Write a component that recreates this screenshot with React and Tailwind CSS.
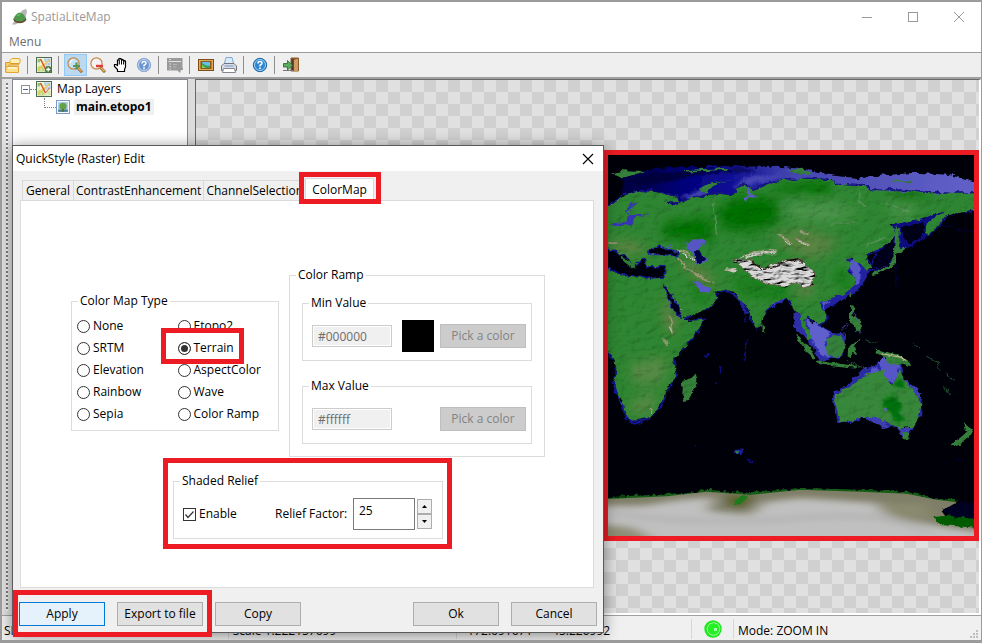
import { useState } from 'react'
import clsx from 'clsx'

const TABS = ['General', 'ContrastEnhancement', 'ChannelSelection', 'ColorMap']

const MAP_TYPES = [
  'None', 'Etopo2',
  'SRTM', 'Terrain',
  'Elevation', 'AspectColor',
  'Rainbow', 'Wave',
  'Sepia', 'Color Ramp',
]

// Red rectangle drawn over the part of the window being explained
function Mark({ className }) {
  return <div className={clsx('absolute border-5 border-[#ed1c24] pointer-events-none', className)} />
}

function Icon({ children, size = 16 }) {
  return (
    <svg width={size} height={size} viewBox="0 0 16 16" fill="none" className="shrink-0" aria-hidden="true">
      {children}
    </svg>
  )
}

function LogoIcon() {
  return (
    <Icon>
      <path d="M8 5 L10 1.500 L14 0 L15 2 L13.500 9 L11 9Z" fill="#b4b4b4" />
      <path d="M0 15.500 L3 11 L7 13 L4 15.500Z" fill="#b9b3ae" />
      <path d="M1.200 10 Q2 14 7 14.200 Q13 14 14.500 10.500 L13 8 L3 8Z" fill="#6b4a32" />
      <path d="M1.800 10 Q3.500 4 8 3.500 Q12 4.500 13.800 9.500 Q11 12.500 8 12.500 Q4 12.500 1.800 10Z" fill="#4d9a4e" />
      <path d="M4.500 7 Q6 4.500 8.500 4.500 Q8 7 4.500 7Z" fill="#7fc07a" />
    </Icon>
  )
}

function OpenIcon() {
  return (
    <Icon>
      <path d="M5 7 V3.500 L7 1.500 H13 Q15.500 1 15.300 4 L14 7Z" fill="#fff1b8" stroke="#e0a32e" />
      <path d="M.5 5.500 H4.500 L6 6.500 H13.500 V8 H4 L.5 15Z" fill="#f5cf6b" stroke="#dc9a25" />
      <path d="M1 9.500 H13.500 V15.500 H.8Z" fill="#ffe08a" stroke="#e3a534" />
      <path d="M3 11 H12" stroke="#fff8dc" strokeWidth="1.500" />
    </Icon>
  )
}

function MapIcon({ add }) {
  return (
    <Icon>
      <rect x=".5" y=".5" width="15" height="15" fill="#fff" stroke="#4d6b50" />
      <rect x="1.500" y="1.500" width="13" height="13" fill="#eff0b8" />
      <path d="M8 1.500 H14.500 V8 L10 9Z" fill="#a6c8ef" />
      <path d="M1.500 2 H5 L4 6 H1.500Z" fill="#8cc474" />
      <path d="M1.500 10 L6 8 L9 14.500 H1.500Z" fill="#b9da80" />
      <path d="M10 10 H14.500 V14.500 H9Z" fill="#cfe6b0" />
      <path d="M1.500 5.500 H14 M5 1.500 V14 M11 1.500 V14" stroke="#fff" strokeOpacity=".5" />
      <path d="M2 13 L13.500 3" stroke="#f3c64c" strokeWidth="1.400" />
      <path d="M4.500 2 L9.500 12" stroke="#d8503c" strokeWidth="1.500" />
      {add
        ? (
          <>
            <circle cx="12.200" cy="12.500" r="3.400" fill="#4b7a43" />
            <path d="M12.200 10.500 V14.500 M10.200 12.500 H14.200" stroke="#fff" strokeWidth="1.300" />
          </>
        )
        : <path d="M9.500 12 L13.500 7" stroke="#e0693d" />}
    </Icon>
  )
}

function ZoomIcon({ out }) {
  return (
    <Icon>
      <path d="M10.500 10.500 L15 15.200" stroke="#9a642c" strokeWidth="2.800" />
      <path d="M11 11 L14.500 14.500" stroke="#e8b266" strokeWidth="1.200" />
      <circle cx="6.500" cy="6.500" r="5.600" fill={out ? '#f6f1f2' : '#c6e0f6'} stroke="#c08a48" strokeWidth="1.200" />
      <path d="M3 6 Q3.500 3 6.500 2.600" stroke="#fff" />
      {out
        ? <path d="M6 9 H13" stroke="#e23b3b" strokeWidth="2.400" />
        : <path d="M9.500 5.500 V12.500 M6 9 H13" stroke="#4f9a5c" strokeWidth="2.200" />}
    </Icon>
  )
}

function HandIcon() {
  return (
    <Icon>
      <path
        d="M4.500 14.500 V12.500 L1.500 9.500 V7.500 H3 L4.500 8.500 V3 H6 V1.500 H8 V2.500 H10 V3.500 H12 V4.500 H12.500 V10 L11.500 12.500 V14.500Z"
        fill="#fff" stroke="#000" strokeWidth="1.200"
      />
      <path d="M6.300 3 V7.500 M8.500 2.500 V7.500 M10.600 3.500 V7.500" stroke="#000" />
    </Icon>
  )
}

function HelpIcon({ soft }) {
  return (
    <Icon>
      <circle cx="8" cy="8" r="6.700" fill={soft ? '#6b96d2' : '#2f86cf'} stroke={soft ? '#8fa9d4' : '#2467a8'} />
      <circle cx="8" cy="8" r="5.500" stroke={soft ? '#c9daf2' : '#9cd0f5'} />
      <path d="M6 6.500 Q6 4.500 8 4.500 Q10 4.500 10 6.300 Q10 7.500 8 8.300 V9.500" stroke="#fff" strokeWidth="1.500" />
      <rect x="7.200" y="10.500" width="1.600" height="1.600" fill="#fff" />
    </Icon>
  )
}

function TableIcon() {
  return (
    <Icon>
      <path d="M0 1 H15.500 V11 H16 V13 H14 L13 16 L10.500 13.500 H0Z" fill="#9a9a9a" />
      <path d="M1.500 4.500 H14" stroke="#e3e3e3" />
      <path d="M2.500 7 H4 M2.500 9.500 H4 M2.500 12 H4 M2 2.500 H4" stroke="#d8d8d8" />
      <path d="M6 7.500 H10 M6 10 H9" stroke="#b5b5b5" />
    </Icon>
  )
}

function PictureIcon() {
  return (
    <Icon>
      <rect x=".5" y="2.500" width="15" height="11" fill="#b97a2c" stroke="#7c4d16" />
      <rect x="1.500" y="3.500" width="13" height="9" stroke="#e0ad5c" />
      <rect x="3.500" y="4.500" width="9" height="7" fill="#63bff0" stroke="#8a5a1c" />
      <path d="M4 6 Q7 9 12 9 V11 H4Z" fill="#3f9c46" />
      <path d="M4 8 L8 11 H4Z" fill="#7fd06e" />
    </Icon>
  )
}

function PrintIcon() {
  return (
    <Icon>
      <path d="M5 .5 H11 L13 8 H3Z" fill="#d8ebfb" stroke="#7fa7d2" />
      <path d="M.5 9 L3 6.500 H13 L15.500 9 V13.500 H.5Z" fill="#dcdce4" stroke="#74747f" />
      <path d="M2.500 11.500 H13.500 L14.500 15.500 H1.500Z" fill="#fff" stroke="#85858f" />
      <path d="M3.500 9 H12.500" stroke="#6a9ad0" />
    </Icon>
  )
}

function ExitIcon() {
  return (
    <Icon>
      <path d="M8 1 H15.500 V14 H8Z" fill="#8b5a2e" stroke="#8a5a2a" />
      <path d="M11 3 L15 1.500 V15.500 L11 13.500Z" fill="#d09a62" />
      <path d="M9.500 2 V13" stroke="#4d3a2a" strokeWidth="2" />
      <path d="M0 13.500 H10" stroke="#777" />
      <path d="M.5 6.500 H4.500 V3.500 L9.500 8.300 L4.500 13 V10 H.5Z" fill="#5cab5e" stroke="#37793f" />
    </Icon>
  )
}

function RasterIcon() {
  return (
    <Icon size={14}>
      <rect x=".6" y=".6" width="14.800" height="14.800" fill="#fff" stroke="#7c9cc8" strokeWidth="1.200" />
      <rect x="2.500" y="2.500" width="11" height="11" fill="#9fc3ea" />
      <path d="M2.500 11 H13.500 V13.500 H2.500Z" fill="#4a7d8e" />
      <circle cx="8" cy="7" r="4" fill="#63a344" />
      <path d="M8 10 V13.500" stroke="#57722c" strokeWidth="2" />
    </Icon>
  )
}

const TOOLS = [
  { label: 'Open database', icon: <OpenIcon />, sep: true },
  { label: 'Add map layer', icon: <MapIcon add />, sep: true },
  { label: 'Zoom in', icon: <ZoomIcon />, active: true },
  { label: 'Zoom out', icon: <ZoomIcon out /> },
  { label: 'Pan', icon: <HandIcon /> },
  { label: 'Identify', icon: <HelpIcon soft />, sep: true },
  { label: 'Map options', icon: <TableIcon />, sep: true },
  { label: 'Save image', icon: <PictureIcon /> },
  { label: 'Print', icon: <PrintIcon />, sep: true },
  { label: 'About', icon: <HelpIcon />, sep: true },
  { label: 'Exit', icon: <ExitIcon /> },
]

const EURASIA_AFRICA =
  'M24 192 L40 180 L70 158 L120 144 L172 147 L232 165 L238 178 L195 173 L218 188 L262 168 L300 160 L352 152 L402 156 L410 134 L430 125 L462 142 L492 125 L540 114 L620 107 L702 112 L706 125 L800 130 L810 142 L900 142 L980 150 L1060 152 L1140 150 L1140 198 L1060 210 L1030 225 L1015 250 L985 278 L976 262 L986 235 L1030 207 L1000 214 L980 222 L870 248 L884 256 L886 276 L870 300 L832 322 L800 334 L800 350 L815 376 L800 384 L785 362 L765 356 L752 344 L735 352 L754 366 L742 382 L764 402 L768 425 L740 450 L690 468 L660 478 L665 495 L680 520 L672 538 L655 547 L640 530 L620 518 L612 530 L626 562 L640 590 L628 592 L604 545 L600 508 L586 500 L570 475 L558 465 L530 477 L500 500 L488 520 L482 550 L470 556 L452 525 L436 485 L420 472 L395 443 L340 443 L352 465 L335 490 L300 505 L246 525 L250 534 L312 530 L290 570 L262 600 L235 630 L220 648 L228 700 L200 738 L190 772 L172 800 L150 822 L120 830 L95 833 L80 824 L70 790 L52 750 L40 715 L50 688 L46 650 L14 622 V192Z'

const AUSTRALIA =
  'M705 750 L720 745 L750 735 L775 708 L790 704 L800 690 L822 685 L856 680 L850 700 L880 722 L892 695 L900 680 L912 715 L935 735 L955 760 L965 785 L958 820 L938 853 L900 856 L870 845 L858 828 L845 838 L828 822 L790 822 L755 832 L716 835 L712 800 L702 775Z'

const TIBET =
  'M400 356 L422 345 L452 350 L488 374 L530 364 L560 350 L605 350 L645 388 L636 428 L610 436 L592 418 L558 430 L500 424 L452 396 L425 374Z'

const ISLANDS = [
  'M285 688 L290 710 L280 745 L268 772 L252 774 L246 755 L250 712 L270 702Z',
  'M584 575 L600 582 L630 612 L650 650 L640 648 L610 620Z',
  'M652 652 L690 658 L735 664 L770 668 L765 674 L700 668 L655 660Z',
  'M676 590 L700 575 L722 580 L735 600 L728 635 L706 645 L680 632Z',
  'M745 602 L790 592 L762 606 L772 640 L758 630 L752 646 L742 640Z',
  'M822 612 L850 625 L890 632 L925 652 L935 670 L905 662 L870 665 L850 640 L830 630Z',
  'M750 488 L762 492 L758 515 L778 525 L786 560 L768 568 L765 548 L748 535Z',
  'M887 250 L900 252 L898 318 L928 312 L905 328 L888 330 L888 358 L872 376 L820 400 L812 396 L845 378 L868 362 L880 340Z',
  'M903 870 L930 870 L928 888 L918 893 L908 885Z',
  'M1090 835 L1104 850 L1120 858 L1108 880 L1080 902 L1056 912 L1052 904 L1082 882 L1100 866Z',
  'M300 135 L330 118 L412 106 L352 118 L322 146 L302 144Z',
  'M28 92 L60 84 L140 86 L118 94 L72 104 L50 96Z',
  'M560 80 L600 78 L640 90 L622 96 L580 90Z',
  'M865 112 L936 112 L930 118 L870 118Z',
  'M484 540 L494 550 L492 568 L484 562Z',
  'M750 452 L756 450 L752 464 L747 460Z',
  'M256 80 L390 74 L380 82 L260 86Z',
]

function WorldMap() {
  return (
    <svg viewBox="-1212 24 2349 1167" className="block w-full" role="img" aria-label="etopo1 shaded relief">
      <defs>
        <filter id="relief" x="0" y="0" width="100%" height="100%">
          <feTurbulence type="fractalNoise" baseFrequency=".03 .045" numOctaves="5" seed="4" result="noise" />
          <feDisplacementMap in="SourceGraphic" in2="noise" scale="18" xChannelSelector="R" yChannelSelector="G" result="rough" />
          <feColorMatrix in="noise" values="0 0 0 0 0  0 0 0 0 0  0 0 0 0 0  1 0 0 0 0" result="height" />
          <feDiffuseLighting in="height" surfaceScale="4" diffuseConstant="1.200" lightingColor="#fff" result="light">
            <feDistantLight azimuth="225" elevation="55" />
          </feDiffuseLighting>
          <feComposite in="rough" in2="light" operator="arithmetic" k1="1" result="lit" />
          <feComposite in="lit" in2="rough" operator="in" />
        </filter>
        {/* same terrain, much steeper, for the high plateau */}
        <filter id="ridges" x="-5%" y="-5%" width="110%" height="110%">
          <feTurbulence type="fractalNoise" baseFrequency=".03 .09" numOctaves="4" seed="7" result="noise" />
          <feDisplacementMap in="SourceGraphic" in2="noise" scale="16" xChannelSelector="R" yChannelSelector="G" result="rough" />
          <feColorMatrix in="noise" values="0 0 0 0 0  0 0 0 0 0  0 0 0 0 0  1 0 0 0 0" result="height" />
          <feDiffuseLighting in="height" surfaceScale="22" diffuseConstant="1.150" lightingColor="#fff" result="light">
            <feDistantLight azimuth="235" elevation="60" />
          </feDiffuseLighting>
          <feComposite in="rough" in2="light" operator="arithmetic" k1="1" result="lit" />
          <feComposite in="lit" in2="rough" operator="in" />
        </filter>
        <filter id="coast" x="-10%" y="-10%" width="120%" height="120%">
          <feTurbulence type="fractalNoise" baseFrequency=".05" numOctaves="3" seed="9" result="n" />
          <feDisplacementMap in="SourceGraphic" in2="n" scale="20" xChannelSelector="R" yChannelSelector="G" />
        </filter>
        <filter id="soft" x="-20%" y="-20%" width="140%" height="140%"><feGaussianBlur stdDeviation="16" /></filter>
        <filter id="haze" x="-20%" y="-20%" width="140%" height="140%"><feGaussianBlur stdDeviation="22 9" /></filter>
        <filter id="fade" x="-20%" y="-20%" width="140%" height="140%"><feGaussianBlur stdDeviation="5" /></filter>
        <linearGradient id="arctic" x1="24" x2="1122" y1="0" y2="0" gradientUnits="userSpaceOnUse">
          <stop offset="0" stopColor="#000030" />
          <stop offset=".2" stopColor="#000078" />
          <stop offset=".34" stopColor="#101098" />
          <stop offset=".5" stopColor="#4444b0" />
          <stop offset=".75" stopColor="#5454bc" />
          <stop offset="1" stopColor="#6060c8" />
        </linearGradient>
        <clipPath id="land"><path d={EURASIA_AFRICA} /></clipPath>
        <clipPath id="ice"><path d="M24 1068 L200 1060 L320 1046 L450 1056 L600 1040 L780 1046 L920 1052 L1010 1070 L1070 1078 L1050 1090 L1025 1105 L1040 1125 L1137 1150 V1191 H24Z" /></clipPath>
      </defs>
      <rect x="-1212" y="24" width="2349" height="1167" fill="#000009" />

      {/* shelves */}
      <g filter="url(#coast)">
        <path d="M70 90 L200 74 L390 70 L550 72 L625 80 L700 98 L780 106 L860 96 L950 89 L1050 96 L1140 122 V180 H400 L120 190 L70 150Z" fill="url(#arctic)" />
        <g filter="url(#fade)">
          <path d="M600 98 L480 84 L320 90 L180 120 L120 130 L80 110 L150 90 L300 82 L430 78Z" fill="#00003c" />
          <path d="M240 160 L300 140 L330 150 L280 165Z M400 130 L450 100 L560 95 L520 110 L430 128Z" fill="#4444b4" />
        </g>
        <path d={EURASIA_AFRICA} fill="none" stroke="#12127c" strokeWidth="7" />
        <path d={AUSTRALIA} fill="none" stroke="#2c2ca8" strokeWidth="9" />
        <path d="M700 770 L750 715 L790 680 L840 660 L846 640 L905 665 L900 710 L870 725 L780 735Z" fill="#2c2ca4" />
        <path d="M835 660 L848 642 L900 665 L895 700 L882 722 L855 705Z M790 700 L830 668 L840 690Z" fill="#5656c8" />
        <path d="M900 700 L965 750 L955 770 L925 735Z M780 815 L835 815 L870 850 L850 855Z M890 850 H938 L925 880 H905Z" fill="#3c3cb4" />
        <path d="M735 350 L775 345 L808 385 L790 425 L745 462 L665 505 L655 475 L755 425Z" fill="#2020a0" />
        <path d="M742 354 L770 350 L784 380 L778 420 L766 425 L760 395Z M665 480 L690 470 L672 495Z" fill="#5858c4" />
        <path d="M612 520 L640 540 L665 550 L700 570 L738 575 L730 640 L660 655 L625 590 L585 560 L580 510 L600 505Z" fill="#2e2ea8" />
        <path d="M618 528 L640 540 L660 552 L690 568 L674 600 L690 640 L665 640 L640 600Z" fill="#6060cc" />
        <path d="M860 248 L900 225 L975 222 L1030 202 L1000 235 L980 280 L935 308 L905 325 L880 330 L890 260Z" fill="#0c0c80" />
        <path d="M905 250 L970 240 L978 270 L935 300 L910 290Z" fill="#000018" />
        <path d="M828 330 L885 275 L885 330 L865 372 L810 382Z" fill="#00001c" stroke="#18188c" strokeWidth="4" />
        <path d="M400 445 L425 475 L440 515 L430 490Z M495 500 L530 472 L560 462 L540 478Z" fill="#4a4ad0" stroke="#2222a0" strokeWidth="6" />
        <path d="M46 700 L44 730 L75 810 L98 842 L125 836" stroke="#1414a0" strokeWidth="7" fill="none" />
        <path d="M315 640 L330 635 M360 672 L362 690 M352 715 L350 722 M438 520 V535 M440 590 L432 655 M285 910 H295 M440 950 L456 956" stroke="#101088" strokeWidth="4" fill="none" />
        <path d="M404 925 H428" stroke="#1c1ca0" strokeWidth="10" />
        <path d="M408 926 H420" stroke="#2c7c50" strokeWidth="5" />
        <path d="M1020 245 L1060 252 M1070 258 L1122 268 M930 310 L1010 265 M888 355 L890 430 M1070 945 L1085 955" stroke="#030340" strokeWidth="3" fill="none" />
      </g>

      {/* land */}
      <g filter="url(#relief)">
        <path d={EURASIA_AFRICA} fill="#2f8632" />
        <g clipPath="url(#land)">
          <g filter="url(#soft)">
            <path d="M370 190 L410 160 L530 165 L535 240 L450 265 L370 255 L345 200Z" fill="#047006" />
            <path d="M190 240 L330 220 L340 300 L270 290 L190 285Z M500 130 L680 112 L700 150 L560 150Z M850 150 L960 155 L1000 170 L900 170Z" fill="#067206" />
            <path d="M405 395 L470 425 L570 440 L560 460 L430 450Z M710 380 L745 400 L750 440 L710 410Z M270 390 L330 450 L300 480Z" fill="#0a780e" />
            <path d="M560 180 L700 180 L780 200 L700 240 L570 230Z M860 180 L960 190 L940 220 L880 220Z" fill="#4a9448" />
            <path d="M520 270 L620 260 L720 290 L650 350 L560 320Z" fill="#5a8442" />
            <path d="M230 340 L300 370 L350 420 L330 430 L280 390Z M24 295 L130 305 L130 330 L60 325Z" fill="#6e8448" />
            <path d="M90 660 L200 640 L190 720 L100 720Z M90 780 L160 740 L170 790 L100 820Z" fill="#568a44" />
            <path d="M190 450 L230 540 L220 570 L195 545Z M590 430 L645 425 L635 450 L600 455Z" fill="#72804c" />
          </g>
          <path d="M232 320 L262 330 L290 345 M232 345 L262 378 L300 400 L345 420 M532 275 L560 290 L580 304 M590 290 L630 303 M596 262 L625 272 M208 515 L216 545 L220 570 M186 590 L206 605 M148 798 L156 808 M220 475 L245 505 M374 382 L412 384 M430 338 L490 322 L530 324 M28 302 L52 300" stroke="#a59a7e" strokeWidth="4" fill="none" />
          <path d="M235 324 L288 350 M540 280 L575 308 M595 294 L628 307 M210 545 L218 565 M378 378 L408 380 M420 345 L470 330 L530 329" stroke="#d4cccb" strokeWidth="3" fill="none" />
          <path d="M340 180 L350 280 M780 150 L775 175 L800 192 M860 180 L925 205 M690 244 L770 236 M800 310 L855 280 M60 165 L30 190" stroke="#5a925a" strokeWidth="4" fill="none" />
        </g>
        <path d={AUSTRALIA} fill="#37883a" />
        <g filter="url(#fade)">
          <path d="M850 765 L885 755 L905 790 L900 810 L922 835 L892 842 L875 815 L850 790Z M880 726 L902 700 L915 740Z" fill="#067208" />
        </g>
        {ISLANDS.map(d => <path key={d} d={d} fill="#34803a" />)}
        <path d="M845 632 L900 642 L922 652" stroke="#bcb48c" strokeWidth="4" fill="none" />
      </g>

      {/* high asia */}
      <g filter="url(#ridges)">
        <path d={TIBET} fill="#dcdcdc" stroke="#6b5a44" strokeWidth="3" />
        <path d="M430 341 L470 330 L520 322 L534 326 L490 334 L440 346Z M378 380 L400 374 L415 380 L400 390Z" fill="#d0c8c0" />
      </g>
      <path d="M452 354 L488 378 L530 368 L562 352 L610 354" stroke="#2c2018" strokeWidth="4" fill="none" filter="url(#coast)" />

      {/* inland seas */}
      <g filter="url(#coast)">
        <path d="M14 315 L50 325 L85 345 L98 368 L118 360 L130 345 L142 372 L196 370 L192 402 L150 406 L120 398 L72 398 L14 370Z" fill="#00000f" stroke="#16168c" strokeWidth="4" />
        <path d="M48 322 L62 340 L88 352 L110 372 L98 376 L70 355Z" fill="#2f7c34" />
        <path d="M145 325 L175 308 L195 318 L232 325 L230 338 L190 335 L150 335Z" fill="#00000c" stroke="#20209c" strokeWidth="4" />
        <path d="M190 308 L214 304 L210 312Z" fill="#5454c4" />
        <path d="M258 296 L280 288 L320 292 L318 304 L292 318 L304 335 L320 350 L308 366 L285 360 L280 335 L264 315Z" fill="#5454c4" />
        <path d="M282 325 L298 325 L312 350 L304 366 L288 358Z" fill="#00004a" />
        <path d="M188 424 L200 430 L225 475 L246 512 L240 524 L222 505 L205 465Z" fill="#00001c" stroke="#20209c" strokeWidth="3" />
        <path d="M276 412 L296 416 L332 438 L320 448 L300 446Z" fill="#5858cc" />
        <path d="M120 178 L105 185 L92 200 L78 210 L100 216 L150 214 L110 222 L95 248 L30 245 L35 240 L75 238 L88 218 L78 205 L95 182Z" fill="#3636b4" />
        <path d="M445 132 L442 160 L430 172 L436 176 L450 162 L470 165 L452 150Z" fill="#5c5cc8" />
        <path d="M855 790 L862 800 L858 808Z" fill="#6060d0" />
      </g>

      {/* arcs of small islands */}
      <g filter="url(#coast)" fill="none" stroke="#2f7f44" strokeWidth="2">
        <path d="M940 600 L960 615 M975 640 L1015 655 L1018 680 M1040 690 L1058 715 M1028 725 L1052 755 M740 650 L800 680 M790 590 L830 600" />
        <path d="M758 510 L780 530 M745 540 L730 565 M770 565 L785 575" stroke="#5858c4" />
      </g>

      {/* antarctica */}
      <path d="M24 1068 L200 1060 L320 1046 L450 1056 L600 1040 L780 1046 L920 1052 L1010 1072 L1070 1078" stroke="#125c18" strokeWidth="12" fill="none" filter="url(#coast)" />
      <g clipPath="url(#ice)">
        <rect x="24" y="1030" width="1113" height="161" fill="#7e7d66" />
        <g filter="url(#haze)">
          <path d="M-60 1090 L130 1088 L240 1070 L345 1062 L325 1105 L450 1115 L490 1078 L600 1064 L830 1080 L850 1110 L900 1130 L1160 1170 V1230 H-60Z" fill="#c0c0c0" />
          <path d="M-60 1140 L90 1150 L150 1180 V1210 H-60Z" fill="#8e8e76" />
          <path d="M840 1080 L980 1080 L1000 1130 L860 1120Z" fill="#8a8a70" />
          <path d="M370 1056 H460 L450 1092 L390 1096Z" fill="#5c602c" />
        </g>
        <path d="M24 1110 Q300 1150 600 1125 T1000 1180" stroke="#a2a2a2" strokeOpacity=".6" strokeWidth="10" fill="none" filter="url(#haze)" />
        <path d="M405 1072 L430 1056 L445 1062 L420 1086 L398 1090Z" fill="#1c7a1c" filter="url(#coast)" />
      </g>
      <path d="M1025 1098 L1070 1080 H1150 V1130 L1050 1120Z" fill="#000024" filter="url(#coast)" />
      <path d="M1000 1122 L1040 1118 L1150 1130 V1156 L1020 1146Z" fill="#045a04" filter="url(#coast)" />
    </svg>
  )
}

function Toolbar() {
  return (
    <div className="flex h-6 items-center bg-[#efefef]">
      {TOOLS.map(tool => (
        <div key={tool.label} className="flex items-center">
          <button
            aria-label={tool.label}
            className={clsx(
              'flex h-[22px] w-[23px] items-center border pl-0.5',
              tool.active ? 'border-[#90c8f6] bg-[#bdd9f0]' : 'border-transparent',
            )}
          >
            {tool.icon}
          </button>
          {tool.sep && <span className="mr-[5px] ml-0.5 h-[18px] w-px bg-[#8d8d8d]" />}
        </div>
      ))}
    </div>
  )
}

function LayerTree() {
  return (
    <aside className="w-44 shrink-0 border border-[#828790] bg-white pl-2">
      <div className="flex h-[18px] items-center">
        <button aria-label="Collapse Map Layers" className="flex size-[9px] items-center justify-center border border-[#919191] bg-white">
          <span className="h-px w-[5px] bg-[#4b63a7]" />
        </button>
        <span className="w-1.5 border-t border-dotted border-[#808080]" />
        <MapIcon />
        <span className="ml-[5px]">Map Layers</span>
      </div>
      <div className="flex h-[18px] items-center pl-[23px]">
        <span className="mb-2 h-2.5 w-3 border-b border-l border-dotted border-[#808080]" />
        <RasterIcon />
        <span className="ml-1 bg-[#f0f0f0] px-0.5 font-bold">main.etopo1</span>
      </div>
    </aside>
  )
}

function Group({ title, className, children }) {
  return (
    <fieldset className={clsx('border border-[#dcdcdc]', className)}>
      <legend className="ml-1.5 px-0.5">{title}</legend>
      {children}
    </fieldset>
  )
}

function ColorValue({ title, value, swatch }) {
  return (
    <Group title={title}>
      <div className="flex items-center pt-[9px] pr-[5px] pb-2 pl-[9px]">
        <input
          aria-label={title}
          value={value}
          disabled
          className="h-[22px] w-20 border border-[#cccccc] bg-[#f0f0f0] px-[5px] text-[#6d6d6d] shadow-[inset_0_0_0_1px_#fff]"
        />
        <span className={clsx('mr-1.5 ml-2.5 size-8', swatch)} />
        <button disabled className="h-6 w-[86px] border border-[#bfbfbf] bg-[#cccccc] text-[#838383]">
          Pick a color
        </button>
      </div>
    </Group>
  )
}

function DialogButton({ primary, children }) {
  return (
    <button
      className={clsx(
        'h-6 w-[86px] border whitespace-nowrap',
        primary ? 'border-[#0078d7] bg-[#e5f1fb]' : 'border-[#adadad] bg-[#e1e1e1]',
      )}
    >
      {children}
    </button>
  )
}

function QuickStyleDialog() {
  const [tab, setTab] = useState('ColorMap')
  const [mapType, setMapType] = useState('Terrain')
  const [shaded, setShaded] = useState(true)
  const [factor, setFactor] = useState(25)

  return (
    <section
      role="dialog"
      aria-label="QuickStyle (Raster) Edit"
      className="absolute top-[143px] left-2.5 w-[592px] border border-[#5a5a5a] bg-[#f0f0f0] shadow-[0_2px_14px_rgba(0,0,0,0.45)]"
    >
      <header className="flex h-[25px] items-center justify-between bg-white pr-[9px] pl-[3px]">
        <h2>QuickStyle (Raster) Edit</h2>
        <button aria-label="Close">
          <svg width="12" height="12" viewBox="0 0 12 12" stroke="#000" strokeWidth="1.100" aria-hidden="true">
            <path d="M1 1 L11 11 M11 1 L1 11" />
          </svg>
        </button>
      </header>

      <div role="tablist" className="relative z-10 -mb-px ml-[9px] flex items-end pt-[7px]">
        {TABS.map(t => (
          <button
            key={t}
            role="tab"
            aria-selected={t === tab}
            onClick={() => setTab(t)}
            className={clsx(
              'min-w-[52px] border border-[#d9d9d9] whitespace-nowrap',
              t === tab ? 'h-[23px] border-b-white bg-white px-1.5' : 'mr-[-1px] h-[21px] bg-[#f0f0f0] px-0.5',
            )}
          >
            {t}
          </button>
        ))}
      </div>

      <div className="mr-[9px] ml-[7px] border border-[#dcdcdc] bg-white pt-[66px] pb-12 pl-[50px]">
        <div className="flex items-start gap-2.5">
          <Group title="Color Map Type" className="mt-[26px] w-52">
            <div className="relative grid grid-cols-2 pt-1.5 pb-[5px] pl-[5px]">
              {MAP_TYPES.map(type => (
                <label key={type} className="flex h-[22px] items-center gap-[3px]">
                  <input
                    type="radio"
                    name="mapType"
                    checked={mapType === type}
                    onChange={() => setMapType(type)}
                    className="size-[13px] shrink-0 appearance-none rounded-full border border-[#333] bg-white checked:bg-[#333] checked:shadow-[inset_0_0_0_2px_#fff]"
                  />
                  {type}
                </label>
              ))}
              <Mark className="top-[19px] left-[89px] h-9 w-[83px]" />
            </div>
          </Group>

          <Group title="Color Ramp" className="w-64">
            <div className="flex flex-col gap-[17px] p-3">
              <ColorValue title="Min Value" value="#000000" swatch="bg-black" />
              <ColorValue title="Max Value" value="#ffffff" swatch="bg-white" />
            </div>
          </Group>
        </div>

        <div className="relative mt-4 ml-[102px] w-[270px]">
          <Group title="Shaded Relief">
            <div className="flex items-center pt-[9px] pb-2 pl-[9px]">
              <label className="flex w-[92px] items-center gap-[3px]">
                <span className="relative flex size-[13px]">
                  <input
                    type="checkbox"
                    checked={shaded}
                    onChange={e => setShaded(e.target.checked)}
                    className="size-[13px] appearance-none border border-[#333] bg-white"
                  />
                  {shaded && (
                    <svg className="pointer-events-none absolute inset-0" width="13" height="13" viewBox="0 0 13 13" fill="none" stroke="#333" strokeWidth="1.200">
                      <path d="M2.500 6.500 L5 9.500 L10.500 3.500" />
                    </svg>
                  )}
                </span>
                Enable
              </label>
              <label htmlFor="factor" className="w-[78px] whitespace-nowrap">Relief Factor:</label>
              <input
                id="factor"
                value={factor}
                onChange={e => setFactor(Number(e.target.value) || 0)}
                className="h-8 w-[62px] border border-[#7a7a7a] bg-white px-[5px] pb-2"
              />
              <div className="ml-0.5 flex flex-col">
                <button aria-label="Increase" onClick={() => setFactor(factor + 1)} className="flex size-[15px] items-center justify-center border border-[#adadad] bg-[#f0f0f0]">
                  <svg width="5" height="3" viewBox="0 0 5 3" aria-hidden="true"><path d="M0 3 L2.500 0 L5 3Z" /></svg>
                </button>
                <button aria-label="Decrease" onClick={() => setFactor(factor - 1)} className="flex size-[15px] items-center justify-center border border-[#adadad] bg-[#f0f0f0]">
                  <svg width="5" height="3" viewBox="0 0 5 3" aria-hidden="true"><path d="M0 0 L2.500 3 L5 0Z" /></svg>
                </button>
              </div>
            </div>
          </Group>
          <Mark className="-top-[15px] -right-[9px] -bottom-2.5 -left-2.5" />
        </div>
      </div>

      <footer className="flex gap-3 px-1.5 pt-3.5 pb-1.5">
        <DialogButton primary>Apply</DialogButton>
        <DialogButton>Export to file</DialogButton>
        <DialogButton>Copy</DialogButton>
        <div className="ml-auto flex gap-3">
          <DialogButton>Ok</DialogButton>
          <DialogButton>Cancel</DialogButton>
        </div>
      </footer>

      <Mark className="top-[26px] left-[286px] z-20 h-8 w-[82px]" />
      <Mark className="-bottom-[5px] left-0 h-[47px] w-[199px]" />
    </section>
  )
}

function StatusBar() {
  return (
    <footer className="flex h-6 items-end bg-[#f0f0f0] pb-px">
      <span className="flex h-5 flex-1 items-end pl-0.5">SRID: 4326</span>
      <span className="flex h-5 flex-1 items-end border-l border-[#d7d7d7] pl-1">Scale 1:222157699</span>
      <span className="flex h-5 flex-1 items-end gap-4 border-l border-[#d7d7d7] pl-2.5">
        <span>172.691671</span>
        <span>-45.220992</span>
      </span>
      <span className="flex h-5 w-[42px] items-center justify-center border-l border-[#d7d7d7]">
        <svg width="18" height="18" viewBox="0 0 18 18" aria-label="Ready">
          <circle cx="9" cy="9" r="8.700" fill="#1fe81f" />
          <circle cx="9.500" cy="9" r="6.300" fill="#25f025" stroke="#a8f8a0" />
          <rect x="10" y="8" width="3" height="3" fill="#a8ffa8" />
        </svg>
      </span>
      <span className="flex h-5 w-[248px] items-end justify-between border-l border-[#d7d7d7] pl-1">
        Mode: ZOOM IN
        <svg className="mr-0.5" width="9" height="9" viewBox="0 0 9 9" fill="#bfbfbf" aria-hidden="true">
          <path d="M6 0h2v2H6z M3 3h2v2H3z M6 3h2v2H6z M0 6h2v2H0z M3 6h2v2H3z M6 6h2v2H6z" />
        </svg>
      </span>
    </footer>
  )
}

export default function App() {
  return (
    <div className="relative flex min-h-screen flex-col overflow-hidden border-t-2 border-r border-b-3 border-l-2 border-[#9b9b9b] bg-white font-['Open_Sans','Noto_Sans',sans-serif] text-xs leading-4 text-black">
      <header className="flex h-[30px] items-center justify-between pr-4 pl-2.5">
        <div className="flex items-center gap-[3px] text-[#999]">
          <LogoIcon />
          <h1>SpatiaLiteMap</h1>
        </div>
        <div className="flex items-center gap-[34px]">
          <button aria-label="Minimize">
            <svg width="12" height="12" viewBox="0 0 12 12" stroke="#999" aria-hidden="true"><path d="M1 6.500 H11" /></svg>
          </button>
          <button aria-label="Maximize">
            <svg width="12" height="12" viewBox="0 0 12 12" fill="none" stroke="#999" aria-hidden="true"><rect x="1.500" y="1.500" width="9" height="9" /></svg>
          </button>
          <button aria-label="Close window">
            <svg width="12" height="12" viewBox="0 0 12 12" stroke="#999" aria-hidden="true"><path d="M1 1 L11 11 M11 1 L1 11" /></svg>
          </button>
        </div>
      </header>
      <nav className="flex h-[21px] items-center border-b border-[#9b9b9b] pl-[7px]">
        <button className="text-[#6d6d6d]">Menu</button>
      </nav>
      <Toolbar />

      <main className="flex flex-1 border-t-2 border-b border-[#a0a0a0] bg-[#e6e6e6]">
        <div className="w-2.5 shrink-0 bg-[#e3e3e3] py-1 pl-1">
          <div className="h-full w-0.5 bg-[linear-gradient(#7d7d7d_50%,#f5f5f5_50%)] bg-[length:2px_4px]" />
        </div>
        <LayerTree />
        <div className="w-[7px] shrink-0 bg-[#dcdcdc]" />
        <div className="flex-1 border-t border-r-2 border-b-2 border-l border-t-[#696969] border-r-white border-b-white border-l-[#696969] bg-[repeating-conic-gradient(#d0d0d0_0_25%,#e0e0e0_0_50%)] bg-[length:24px_24px] pt-[71px]">
          <div className="relative">
            <WorldMap />
            <Mark className="-inset-y-px right-0 w-[376px]" />
          </div>
        </div>
      </main>

      <StatusBar />
      <QuickStyleDialog />
    </div>
  )
}
